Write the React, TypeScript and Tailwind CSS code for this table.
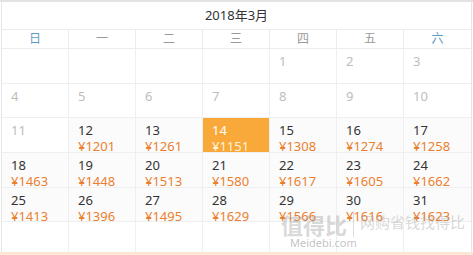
const weekDays = ["日", "一", "二", "三", "四", "五", "六"];

type Day = { n?: number; price?: number; muted?: boolean; active?: boolean };

const prices: Record<number, number> = {
  12: 1201, 13: 1261, 14: 1151, 15: 1308, 16: 1274, 17: 1258,
  18: 1463, 19: 1448, 20: 1513, 21: 1580, 22: 1617, 23: 1605, 24: 1662,
  25: 1413, 26: 1396, 27: 1495, 28: 1629, 29: 1566, 30: 1616, 31: 1623,
};

function buildDays(): Day[] {
  const days: Day[] = [];
  for (let i = 0; i < 4; i++) days.push({});
  for (let n = 1; n <= 31; n++) {
    days.push({ n, price: prices[n], muted: n <= 11, active: n === 14 });
  }
  while (days.length < 42) days.push({});
  return days;
}

export default function App() {
  const days = buildDays();

  return (
    <div
      className="relative h-[255px] w-[473px] overflow-hidden bg-white text-[13px]"
      style={{ fontFamily: '"Noto Sans", "Noto Sans CJK SC", sans-serif' }}
    >
      <div className="h-[2px] bg-[#e3e3e3]" />
      <div className="ml-[1px] w-[471px] border-l border-r border-[#e6e6e6]">
        {/* title */}
        <div className="flex h-[28px] items-center justify-center border-b border-[#ececec] leading-none text-[#333]">
          2018年3月
        </div>

        {/* week header */}
        <div className="grid grid-cols-7 border-b border-[#ececec]">
          {weekDays.map((d, i) => (
            <div
              key={d}
              className={`flex h-[18px] items-center justify-center text-[12px] leading-none ${
                i < 6 ? "border-r border-[#ececec]" : ""
              } ${i === 0 || i === 6 ? "text-[#5f9cc5]" : "text-[#9a9a9a]"}`}
            >
              {d}
            </div>
          ))}
        </div>

        {/* days */}
        <div className="grid grid-cols-7">
          {days.map((d, i) => (
            <div
              key={i}
              className={`h-[34.7px] border-b border-[#efefef] pl-[9px] pt-[4px] leading-[16px] ${
                i % 7 < 6 ? "border-r" : ""
              } ${
                d.active
                  ? "bg-[#f9a83a] text-white"
                  : d.price
                    ? "bg-[#fbfbfb] text-[#333]"
                    : "bg-white text-[#bdbdbd]"
              }`}
            >
              {d.n && <div>{d.n}</div>}
              {d.price && (
                <div className={d.active ? "text-[#fff3dc]" : "text-[#ec7f2d]"}>
                  ¥{d.price}
                </div>
              )}
            </div>
          ))}
        </div>
      </div>
      <div className="absolute bottom-0 left-0 h-[3px] w-full bg-[#fce6d4]" />

      {/* watermark */}
      <div className="pointer-events-none absolute left-[281px] top-[214px] text-[22px] font-bold leading-none text-[#9a9a9a]/40">
        值得比
      </div>
      <div className="pointer-events-none absolute left-[290px] top-[237px] text-[11px] leading-none text-[#9a9a9a]/60">
        Meidebi.com
      </div>
      <div className="pointer-events-none absolute left-[353px] top-[211px] h-[26px] w-px bg-[#bbb]/50" />
      <div className="pointer-events-none absolute left-[360px] top-[215px] text-[15px] leading-none text-[#9a9a9a]/40">
        网购省钱找得比
      </div>
    </div>
  );
}
